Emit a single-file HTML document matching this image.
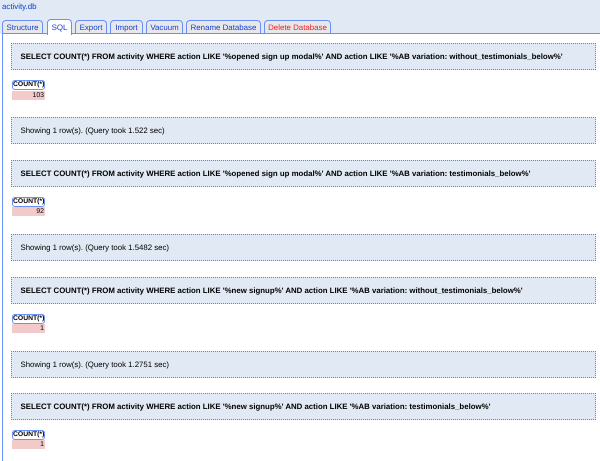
<!DOCTYPE html>
<html><head><meta charset="utf-8">
<style>
html,body{margin:0;padding:0;width:600px;height:461px;overflow:hidden;background:#fff;font-family:"Liberation Sans",sans-serif;font-size:7.82px;color:#000;text-rendering:geometricPrecision}
div{position:absolute;box-sizing:border-box;white-space:nowrap}
#top{left:0;top:0;width:600px;height:34px;background:#e0e9f4}
#line{left:2px;top:33px;width:598px;height:1.3px;background:#6a90f5}
#left{left:2px;top:33px;width:1.3px;height:428px;background:#6a90f5}
#title{left:2px;top:2px;font-size:7.9px;line-height:10.5px;color:#0b3fd0}
.t{top:20px;height:14px;border:1.3px solid #6a90f5;border-bottom:none;border-radius:4px 4px 0 0;background:#e8e8ea;color:#1540d0;text-align:center;line-height:14.5px;font-size:7.9px}
.t.a{top:19px;height:15.5px;background:#fff;line-height:16.5px;z-index:2}
.t.d{color:#f02020}
.b{left:11px;width:585px;height:27px;background:#e0e9f4;border:1px dotted #5a80f5;padding-left:8.5px;line-height:25px}
.s{font-weight:bold;font-size:7.83px}
.h{left:12px;width:33px;height:10px;border:1.3px solid #6a90f5;border-radius:3px;font-weight:bold;font-size:6.8px;line-height:8.6px;text-align:center;background:#fff}
.c{left:12px;width:33px;height:9px;background:#f3caca;font-size:6.9px;line-height:9px;text-align:right;padding-right:1px}
</style></head><body>
<div id="top"></div>
<div id="title">activity.db</div>
<div class="t" style="left:2px;width:41px">Structure</div>
<div class="t a" style="left:47px;width:25px">SQL</div>
<div class="t" style="left:75px;width:32px">Export</div>
<div class="t" style="left:110px;width:33px">Import</div>
<div class="t" style="left:146px;width:37px">Vacuum</div>
<div class="t" style="left:186px;width:75px">Rename Database</div>
<div class="t d" style="left:264px;width:67px">Delete Database</div>
<div id="line"></div>
<div id="left"></div>

<div class="b s" style="top:43px">SELECT COUNT(*) FROM activity WHERE action LIKE '%opened sign up modal%' AND action LIKE '%AB variation: without_testimonials_below%'</div>
<div class="h" style="top:80px">COUNT(*)</div>
<div class="c" style="top:90.5px">103</div>
<div class="b" style="top:117px">Showing 1 row(s). (Query took 1.522 sec)</div>

<div class="b s" style="top:160px">SELECT COUNT(*) FROM activity WHERE action LIKE '%opened sign up modal%' AND action LIKE '%AB variation: testimonials_below%'</div>
<div class="h" style="top:197px">COUNT(*)</div>
<div class="c" style="top:207px">92</div>
<div class="b" style="top:234px">Showing 1 row(s). (Query took 1.5482 sec)</div>

<div class="b s" style="top:277px">SELECT COUNT(*) FROM activity WHERE action LIKE '%new signup%' AND action LIKE '%AB variation: without_testimonials_below%'</div>
<div class="h" style="top:314px">COUNT(*)</div>
<div class="c" style="top:324px">1</div>
<div class="b" style="top:351px">Showing 1 row(s). (Query took 1.2751 sec)</div>

<div class="b s" style="top:393px">SELECT COUNT(*) FROM activity WHERE action LIKE '%new signup%' AND action LIKE '%AB variation: testimonials_below%'</div>
<div class="h" style="top:430px">COUNT(*)</div>
<div class="c" style="top:440px">1</div>
</body></html>
